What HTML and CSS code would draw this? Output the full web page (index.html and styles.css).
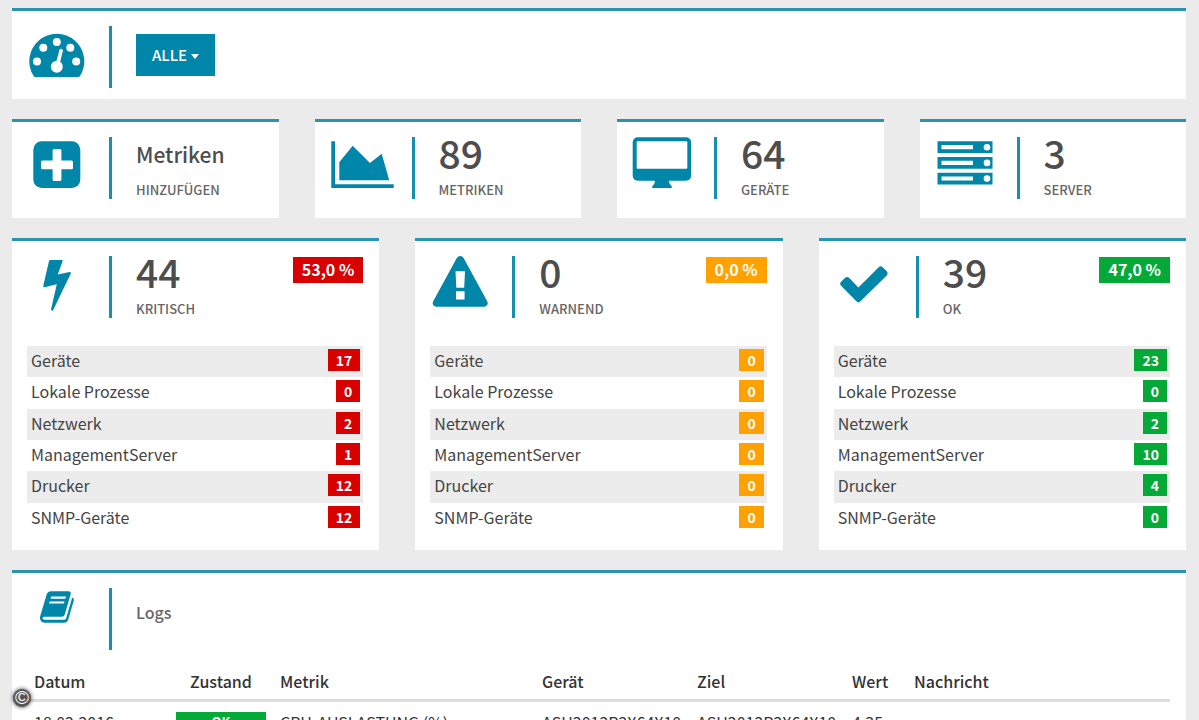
FILE: index.html
```html
<!DOCTYPE html>
<html lang="de">
<head>
<meta charset="utf-8">
<meta name="viewport" content="width=device-width, initial-scale=1">
<title>Dashboard</title>
<link rel="stylesheet" href="styles.css">
</head>
<body>
<main class="dashboard">
  <section class="panel panel-filter">
    <div class="head">
      <svg class="icon" viewBox="0 0 66 62" aria-hidden="true"><path d="M8.2 51Q7.2 51 6.6 50A27.5 27.5 0 1 1 53 50Q52.4 51 51.4 51Z"/><g class="cut"><circle cx="10" cy="35.4" r="4"/><circle cx="16.3" cy="21.8" r="4"/><circle cx="29.8" cy="16" r="4"/><circle cx="43.3" cy="21.8" r="4"/><circle cx="49.2" cy="35.4" r="4"/><circle cx="29.8" cy="40.8" r="6"/><path d="M32.6 23.4Q34.4 21.6 36 24.2L32.4 39L28.6 38Z"/></g></svg>
      <div class="head-text"><button class="filter" type="button">ALLE<span class="caret"></span></button></div>
    </div>
  </section>

  <div class="grid tiles">
    <a class="panel tile" href="#add">
      <div class="head">
        <svg class="icon" viewBox="0 0 66 62" aria-hidden="true"><rect x="6.3" y="4.3" width="47" height="46.8" rx="8.5"/><g class="cut"><rect x="25.6" y="12" width="8.8" height="32" rx="1.5"/><rect x="14" y="23.5" width="32" height="8.8" rx="1.5"/></g></svg>
        <div class="head-text"><span class="title">Metriken</span><span class="label">HINZUFÜGEN</span></div>
      </div>
    </a>
    <section class="panel tile">
      <div class="head">
        <svg class="icon" viewBox="0 0 66 62" aria-hidden="true"><path d="M1.3 4.3H5V47.2H63.7V51H1.3ZM9.3 25.3L22.7 8.7L40 26L51.7 16.7L59.2 43.3H9.3Z"/></svg>
        <div class="head-text"><span class="number">89</span><span class="label">METRIKEN</span></div>
      </div>
    </section>
    <section class="panel tile">
      <div class="head">
        <svg class="icon" viewBox="0 0 66 62" aria-hidden="true"><rect x=".7" y=".3" width="58.4" height="43.4" rx="5"/><path d="M23.3 43Q23 47 20.3 49V51H39.7V49Q37 47 36.8 43Z"/><rect class="cut" x="4.7" y="4.3" width="50.6" height="27.4" rx="1"/></svg>
        <div class="head-text"><span class="number">64</span><span class="label">GERÄTE</span></div>
      </div>
    </section>
    <section class="panel tile">
      <div class="head">
        <svg class="icon" viewBox="0 0 66 62" aria-hidden="true"><path d="M2.5 4.3h55v11.7h-55zM2.5 20h55v11.7h-55zM2.5 35.7h55v11.7h-55z"/><g class="cut"><path d="M6.5 8h31.5v4.2h-31.5zM6.5 23.7h31.5v4.2h-31.5zM6.5 39.4h31.5v4.2h-31.5z"/><circle cx="52" cy="10.2" r="3.3"/><circle cx="52" cy="25.9" r="3.3"/><circle cx="52" cy="41.6" r="3.3"/></g></svg>
        <div class="head-text"><span class="number">3</span><span class="label">SERVER</span></div>
      </div>
    </section>
  </div>

  <div class="grid states">
    <section class="panel state critical">
      <div class="head">
        <svg class="icon" viewBox="0 0 66 62" aria-hidden="true"><path d="M23.4 4H34.6Q36 4 35.6 5.2L30.8 18.6L42.6 16Q44.4 15.8 43.8 17.6L26.2 54Q25.6 55 24.6 54.6Q23.9 54.2 24.1 53L29.8 28.2L17.6 31.2Q16 31.4 16.3 29.7L22 5Q22.4 4 23.4 4Z"/></svg>
        <div class="head-text"><span class="number">44</span><span class="label">KRITISCH</span></div>
        <span class="percent">53,0 %</span>
      </div>
      <ul class="list">
        <li>Geräte<span class="badge">17</span></li>
        <li>Lokale Prozesse<span class="badge">0</span></li>
        <li>Netzwerk<span class="badge">2</span></li>
        <li>ManagementServer<span class="badge">1</span></li>
        <li>Drucker<span class="badge">12</span></li>
        <li>SNMP-Geräte<span class="badge">12</span></li>
      </ul>
    </section>
    <section class="panel state warning">
      <div class="head">
        <svg class="icon" viewBox="0 0 66 62" aria-hidden="true"><path d="M26.8 2Q28 0 30.2 0T33.6 2L57.2 45.2Q58.4 47.2 57.2 49T53.8 50.7H6.6Q4.4 50.7 3.2 49T3.2 45.2Z"/><path class="cut" d="M25.5 15.2H35L34.2 31.8H26.3ZM26 35.2H34.6V43.4H26Z"/></svg>
        <div class="head-text"><span class="number">0</span><span class="label">WARNEND</span></div>
        <span class="percent">0,0 %</span>
      </div>
      <ul class="list">
        <li>Geräte<span class="badge">0</span></li>
        <li>Lokale Prozesse<span class="badge">0</span></li>
        <li>Netzwerk<span class="badge">0</span></li>
        <li>ManagementServer<span class="badge">0</span></li>
        <li>Drucker<span class="badge">0</span></li>
        <li>SNMP-Geräte<span class="badge">0</span></li>
      </ul>
    </section>
    <section class="panel state ok">
      <div class="head">
        <svg class="icon" viewBox="0 0 66 62" aria-hidden="true"><path d="M6.8 29.6Q5.3 27.8 6.8 26L11.4 21.6Q13 20.2 14.8 21.6L24.4 31.4L45 11Q46.6 9.6 48.4 11L53 15.6Q54.4 17.4 53 19.2L26.2 45.6Q24.4 47.2 22.6 45.6Z"/></svg>
        <div class="head-text"><span class="number">39</span><span class="label">OK</span></div>
        <span class="percent">47,0 %</span>
      </div>
      <ul class="list">
        <li>Geräte<span class="badge">23</span></li>
        <li>Lokale Prozesse<span class="badge">0</span></li>
        <li>Netzwerk<span class="badge">2</span></li>
        <li>ManagementServer<span class="badge">10</span></li>
        <li>Drucker<span class="badge">4</span></li>
        <li>SNMP-Geräte<span class="badge">0</span></li>
      </ul>
    </section>
  </div>

  <section class="panel logs">
    <div class="head">
      <svg class="icon" viewBox="0 0 66 62" aria-hidden="true"><path d="M23.5 3.2H41.5Q44.5 3.4 43.6 6.4L37.8 26.4Q37 28.8 34.5 28.8H16.8Q15.4 29 15.6 30.4Q16 31.8 18 31.8H36.8Q38.6 31.8 39.2 30.2L45 10.2L45.6 9.6Q47.4 10.6 46.7 12.8L41.2 31.8Q40.2 34.8 37 34.8H18Q14 34.6 13 30.8Q12.6 29 13.4 27.4L19.8 6Q20.8 3.4 23.5 3.2Z"/><path class="cut" d="M24.2 8.6H39L38.4 10.8H23.6ZM22.7 13.4H37.5L36.9 15.6H22.1Z"/></svg>
      <div class="head-text"><h2 class="heading">Logs</h2></div>
    </div>
    <table class="log-table">
      <colgroup><col class="c-date"><col class="c-state"><col class="c-metric"><col class="c-host"><col class="c-host"><col class="c-value"><col></colgroup>
      <thead><tr><th>Datum</th><th class="center">Zustand</th><th>Metrik</th><th>Gerät</th><th>Ziel</th><th>Wert</th><th>Nachricht</th></tr></thead>
      <tbody><tr><td>18.02.2016</td><td class="center"><span class="status">OK</span></td><td>CPU-AUSLASTUNG (%)</td><td>ASU2012R2X64X10</td><td>ASU2012R2X64X10</td><td>4.35</td><td></td></tr></tbody>
    </table>
  </section>
</main>
<span class="copyright">©</span>
</body>
</html>
```
FILE: styles.css
```css
* { box-sizing: border-box; }
html, body { height: 100%; }
body {
  margin: 0;
  overflow: hidden;
  background: #ebebeb;
  color: #444;
  font: 16px/24px "Noto Sans CJK SC", "Open Sans", sans-serif;
}
.dashboard {
  display: flex;
  flex-direction: column;
  gap: 20px;
  padding: 8px 13px 0 12px;
}
.grid { display: grid; gap: 36px; }
.tiles { grid-template-columns: repeat(4, 1fr); }
.states { grid-template-columns: repeat(3, 1fr); }
.panel {
  display: block;
  padding: 15px 16px 16px 15px;
  border-top: 3px solid #2a93b0;
  background: #fff;
  color: inherit;
  text-decoration: none;
}
.panel-filter { padding-bottom: 11px; }
.tile { padding-bottom: 19px; }
.head { display: flex; align-items: flex-start; }
.icon { flex: none; width: 66px; height: 62px; fill: #0086a8; }
.icon .cut { fill: #fff; }
.head-text {
  display: flex;
  flex: 1;
  flex-direction: column;
  align-items: flex-start;
  height: 62px;
  margin-left: 16px;
  padding-left: 24px;
  border-left: 3px solid #1690ae;
}
.filter {
  display: flex;
  align-items: center;
  gap: 4px;
  height: 42px;
  margin-top: 8px;
  padding: 0 16px;
  border: 0;
  background: #0086a8;
  color: #fff;
  font: 500 15px/24px "Noto Sans CJK SC", sans-serif;
}
.caret {
  margin-top: 2px;
  border: 4px solid transparent;
  border-top: 5px solid #fff;
  border-bottom: 0;
}
.title { font-size: 21px; font-weight: 500; line-height: 34px; color: #4d4d4d; }
.number { font-size: 39px; line-height: 30px; font-weight: 500; color: #4d4d4d; }
.label { margin-top: auto; margin-bottom: -2px; font-size: 13px; line-height: 22px; font-weight: 500; color: #666; }
.percent {
  padding: 0 9px 2px;
  margin-top: 1px;
  color: #fff;
  font-weight: 700;
  line-height: 24px;
}
.list {
  display: grid;
  grid-auto-rows: 1fr;
  min-height: 188px;
  margin: 28px 0 0;
  padding: 0;
  list-style: none;
}
.list li {
  display: flex;
  align-items: center;
  justify-content: space-between;
  padding: 0 3px 3px 4px;
}
.list li:nth-child(odd) { background: #ececec; }
.badge {
  padding: 0 8px;
  color: #fff;
  font-size: 14px;
  font-weight: 700;
  line-height: 22px;
}
.critical .badge, .critical .percent { background: #d90000; }
.warning .badge, .warning .percent { background: #ffa200; }
.ok .badge, .ok .percent, .status { background: #04a938; }
.heading { margin: 0; padding-top: 12px; font-size: 16px; line-height: 24px; font-weight: 500; color: #666; }
.log-table {
  width: 100%;
  margin-top: 17px;
  border-collapse: collapse;
  table-layout: fixed;
  color: #333;
}
.log-table th {
  padding: 2px 7px 6px;
  border-bottom: 3px solid #ddd;
  text-align: left;
  font-weight: 500;
}
.log-table td { padding: 8px 7px; white-space: nowrap; }
.log-table .center { text-align: center; }
.c-date { width: 142px; }
.c-state { width: 104px; }
.c-metric { width: 262px; }
.c-host { width: 155px; }
.c-value { width: 62px; }
.status { display: block; color: #fff; font-size: 13px; font-weight: 700; line-height: 20px; }
.copyright {
  position: absolute;
  left: 13px;
  bottom: 13px;
  width: 18px;
  height: 18px;
  border-radius: 50%;
  background: #555;
  box-shadow: 0 0 4px #333;
  color: #fff;
  font: 19px/18px "Liberation Sans", sans-serif;
  text-align: center;
}
```
